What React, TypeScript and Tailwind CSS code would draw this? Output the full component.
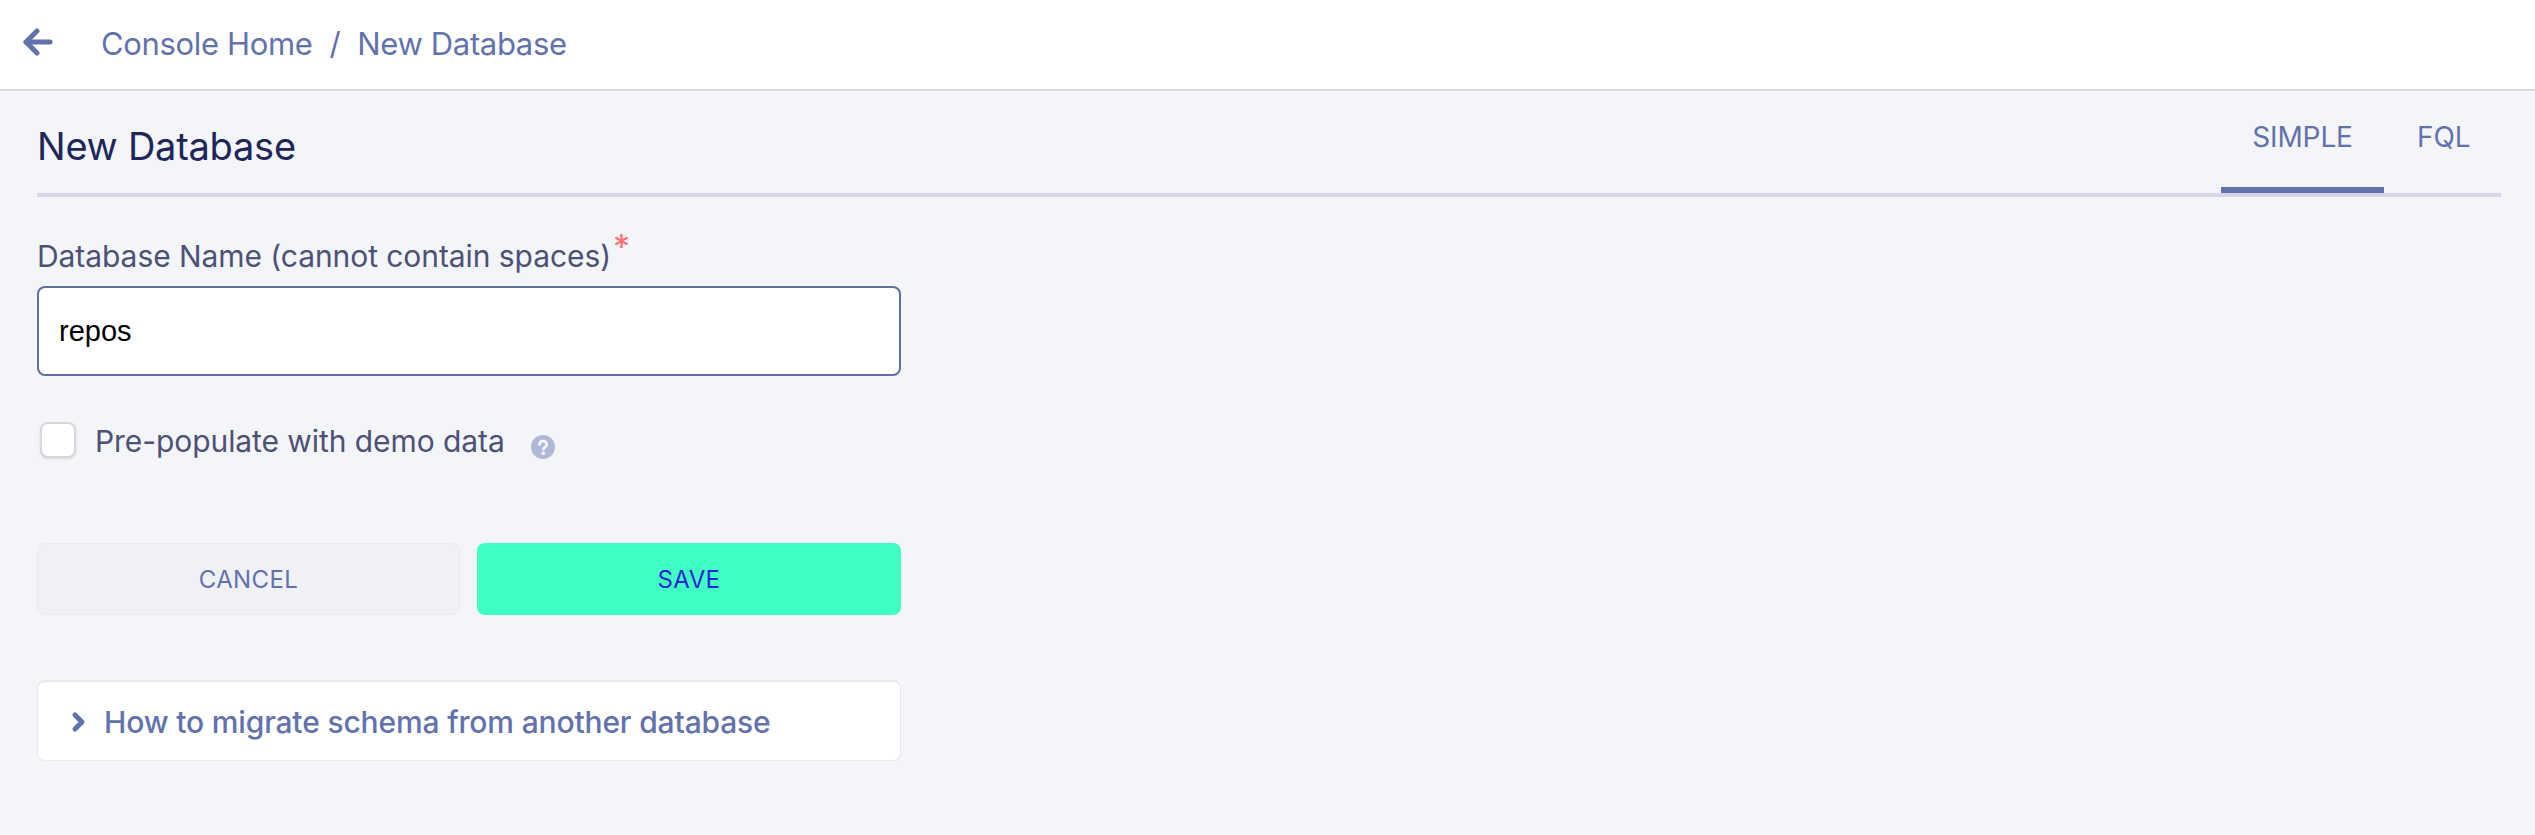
import React from "react";

export default function App() {
  return (
    <div className="w-[2535px] h-[835px] overflow-hidden bg-[#f3f5f9] font-['Inter',sans-serif] flex flex-col">
      <header className="h-[91px] shrink-0 bg-white border-b-2 border-[#d8d8e2] flex items-center pl-[23px] pb-[2px]">
        <svg width="30" height="28" viewBox="0 0 30 28" fill="none" stroke="#6272ae" strokeWidth="5" strokeLinecap="round" strokeLinejoin="round" className="-mt-[3px]">
          <path d="M3 14 H27" />
          <path d="M14 3 L3 14 L14 25" />
        </svg>
        <nav className="ml-[48px] flex items-center text-[31px] tracking-[-0.35px] leading-none text-[#6272ae]">
          <span>Console Home</span>
          <span className="mx-[17px]">/</span>
          <span>New Database</span>
        </nav>
      </header>

      <main className="flex-1 pl-[37px] pr-[34px]">
        <div className="flex justify-between h-[106px] border-b-4 border-[#d6d6e6]">
          <h1 className="mt-[32px] text-[38px] tracking-[-0.25px] leading-[46px] font-normal text-[#20265a]">New Database</h1>
          <div className="flex h-[102px]">
            <div className="w-[163px] h-[102px] border-b-[6px] border-[#6272ae] flex justify-center pt-[30px] text-[28px] leading-[32px] tracking-[-0.1px] text-[#6272ae]">SIMPLE</div>
            <div className="w-[117px] pl-[33px] pt-[30px] text-[28px] leading-[32px] tracking-[-0.1px] text-[#6272ae]">FQL</div>
          </div>
        </div>

        <div className="w-[864px]">
          <label className="block mt-[41px] h-[36px] text-[30px] tracking-[-0.07px] leading-[36px] text-[#4d5177]">
            Database Name (cannot contain spaces)<span className="relative -top-[8px] ml-[2px] text-[#ff6f6f] text-[34px] leading-none">*</span>
          </label>
          <div className="mt-[12px] h-[90px] rounded-[8px] border-2 border-[#5f6f9e] bg-white flex items-center pl-[20px] pt-[2px] font-['Liberation_Sans',sans-serif] text-[29px] text-black">repos</div>

          <div className="mt-[46px] flex items-start">
            <div className="ml-[3px] w-[36px] h-[36px] rounded-[8px] bg-white border-2 border-[#d6d6dc] shadow-sm" />
            <span className="ml-[19px] text-[30px] tracking-[-0.07px] leading-[38px] text-[#4d5177]">Pre-populate with demo data</span>
            <svg className="ml-[26px] mt-[13px]" width="24" height="24" viewBox="0 0 24 24">
              <circle cx="12" cy="12" r="12" fill="#b0b8d8" />
              <path d="M8.5 9.5 C8.5 7.5 10 6.2 12 6.2 C14.2 6.2 15.8 7.6 15.8 9.4 C15.8 11.6 12.4 12 12.4 14.2" fill="none" stroke="#f3f5f9" strokeWidth="2.8" strokeLinecap="round" />
              <circle cx="12.3" cy="18.3" r="1.8" fill="#f3f5f9" />
            </svg>
          </div>

          <div className="mt-[83px] flex gap-[17px] text-[24px] tracking-[0.4px]">
            <button className="w-[423px] h-[72px] pt-[2px] rounded-[8px] bg-[#eff1f6] border border-[#eaebf0] text-[#6272ae]">CANCEL</button>
            <button className="flex-1 h-[72px] pt-[2px] rounded-[8px] bg-[#3fffc2] text-[#2525d8]">SAVE</button>
          </div>

          <div className="mt-[65px] h-[81px] rounded-[8px] bg-white border border-[#e8e9ee] border-t-2 flex items-center pl-[33px] pt-[2px] text-[30px] tracking-[-0.15px] font-medium text-[#6272ae]">
            <svg width="15" height="22" viewBox="0 0 15 22" fill="none" stroke="#6272ae" strokeWidth="5" strokeLinecap="round" strokeLinejoin="round">
              <path d="M4 4 L11 11 L4 18" />
            </svg>
            <span className="ml-[18px]">How to migrate schema from another database</span>
          </div>
        </div>
      </main>
    </div>
  );
}
